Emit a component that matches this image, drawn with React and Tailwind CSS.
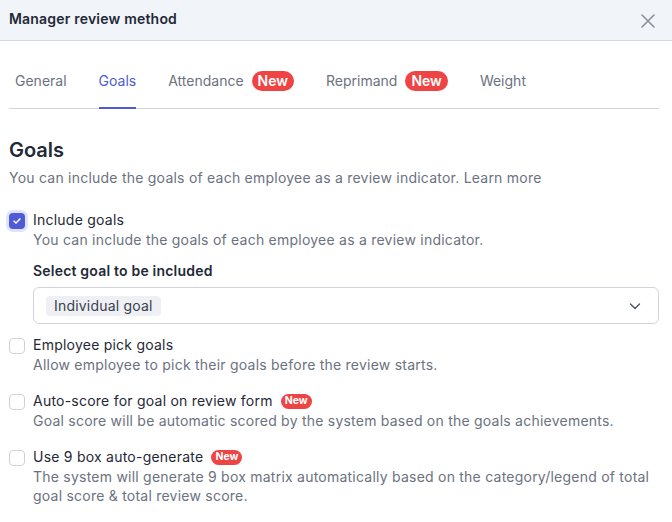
import React from "react";

const font = { fontFamily: "Inter, 'Noto Sans', sans-serif" };

function Badge({ small }) {
  if (small) {
    return (
      <span className="ml-2 inline-flex h-[15px] items-center rounded-full bg-[#ef4444] px-[4px] text-[10.5px] font-bold leading-none tracking-normal text-white">
        New
      </span>
    );
  }
  return (
    <span className="ml-2 inline-flex h-[20px] items-center rounded-full bg-[#ef4444] px-[6px] text-[14px] font-semibold leading-none text-white">
      New
    </span>
  );
}

function Check({ checked }) {
  if (checked) {
    return (
      <div className="mt-[3px] flex h-4 w-4 shrink-0 items-center justify-center rounded-[4px] bg-[#4f5bd5] ring-[3px] ring-[#dfe3fb]">
        <svg width="10" height="10" viewBox="0 0 12 12" fill="none">
          <path d="M2.5 6.2l2.3 2.3 4.7-5" stroke="white" strokeWidth="1.8" strokeLinecap="round" strokeLinejoin="round" />
        </svg>
      </div>
    );
  }
  return <div className="mt-[3px] h-4 w-4 shrink-0 rounded-[4px] border border-[#cfd4dc] bg-white" />;
}

function Option({ checked, title, badge, children }) {
  return (
    <div className="flex gap-2">
      <Check checked={checked} />
      <div className="flex-1">
        <div className="flex items-center text-[14px] leading-[20px] tracking-[0.23px] text-[#1f2937]">
          {title}
          {badge && <Badge small />}
        </div>
        <div className="text-[14px] leading-[19px] tracking-[0.23px] text-[#6b7280]">{children}</div>
      </div>
    </div>
  );
}

export default function App() {
  const tabs = [
    { label: "General" },
    { label: "Goals", active: true },
    { label: "Attendance", badge: true },
    { label: "Reprimand", badge: true },
    { label: "Weight" },
  ];
  return (
    <div className="h-[522px] w-[672px] overflow-hidden bg-white" style={font}>
      <div className="flex h-[41px] items-center justify-between border-b border-[#d5dae2] bg-[#f1f4f9] pl-[9px] pr-[16px]">
        <div className="mb-[4px] text-[14px] font-semibold tracking-[0.2px] text-[#1f2937]">Manager review method</div>
        <svg width="16" height="16" viewBox="0 0 16 16" className="mt-[2px]">
          <path d="M2 2l12 12M14 2L2 14" stroke="#8a9099" strokeWidth="1.6" strokeLinecap="round" />
        </svg>
      </div>

      <div className="px-[9px] pr-[13px]">
        <div className="mt-[30px] flex gap-8 border-b border-[#d1d5db] pl-1.5">
          {tabs.map((t) => (
            <div
              key={t.label}
              className={
                "-mb-px flex h-[38px] items-start border-b-2 pb-4 text-[14px] leading-[20px] " +
                (t.active ? "border-[#4f5bd5] text-[#4f5bd5]" : "border-transparent text-[#6b7280]")
              }
            >
              {t.label}
              {t.badge && <Badge />}
            </div>
          ))}
        </div>

        <div className="mt-[27px] text-[20px] font-semibold leading-[28px] text-[#1f2937]">Goals</div>
        <div className="mt-[4px] text-[14px] leading-[20px] tracking-[0.23px] text-[#6b7280]">
          You can include the goals of each employee as a review indicator. Learn more
        </div>

        <div className="mt-[22px]">
          <Option checked title="Include goals">
            You can include the goals of each employee as a review indicator.
          </Option>
          <div className="ml-6">
            <div className="mt-[12px] text-[14px] font-semibold leading-[20px] tracking-[0.2px] text-[#1f2937]">Select goal to be included</div>
            <div className="mt-[6px] flex h-[37px] items-center justify-between rounded-md border border-[#d1d5db] pl-3 pr-4">
              <span className="rounded bg-[#eef0f3] px-2 text-[14px] leading-[20px] tracking-[0.2px] text-[#374151]">Individual goal</span>
              <svg width="14" height="14" viewBox="0 0 14 14">
                <path d="M2.5 5l4.5 4.5L11.5 5" fill="none" stroke="#4b5563" strokeWidth="1.4" strokeLinecap="round" strokeLinejoin="round" />
              </svg>
            </div>
          </div>
        </div>

        <div className="mt-[11px]">
          <Option title="Employee pick goals">Allow employee to pick their goals before the review starts.</Option>
        </div>
        <div className="mt-[17px]">
          <Option title="Auto-score for goal on review form" badge>
            Goal score will be automatic scored by the system based on the goals achievements.
          </Option>
        </div>
        <div className="mt-[17px]">
          <Option title="Use 9 box auto-generate" badge>
            The system will generate 9 box matrix automatically based on the category/legend of total goal score &amp; total review score.
          </Option>
        </div>
      </div>
    </div>
  );
}
